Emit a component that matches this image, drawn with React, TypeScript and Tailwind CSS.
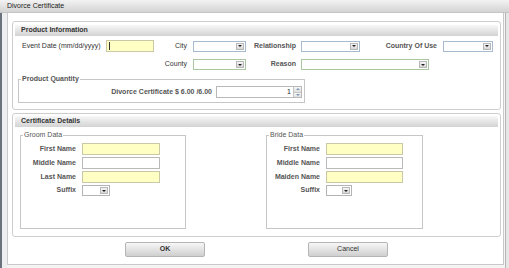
import React from 'react';

type Tone = 'blue' | 'green' | 'gray';

const borderFor = (tone: Tone) =>
  tone === 'green' ? 'border-[#a9c8a0]' : tone === 'blue' ? 'border-[#a6bad0]' : 'border-[#b4b4b4]';

const Select = ({ w, tone = 'blue' }: { w: string; tone?: Tone }) => (
  <div className={`flex h-[11px] ${w} border ${borderFor(tone)} bg-white justify-end`}>
    <div className="w-[8px] my-[1px] mr-[1px] border border-[#b8b8b8] bg-gradient-to-b from-[#f6f6f6] to-[#d6d6d6] flex items-center justify-center">
      <div className="w-0 h-0 border-l-[2px] border-r-[2px] border-t-[2px] border-l-transparent border-r-transparent border-t-[#222]" />
    </div>
  </div>
);

const Input = ({ w, yellow = false, cursor = false }: { w: string; yellow?: boolean; cursor?: boolean }) => (
  <div
    className={`flex items-center h-[12px] ${w} border ${
      yellow ? 'bg-[#ffffc4] border-[#c9c9a8]' : 'bg-white border-[#b9b9b9]'
    }`}
  >
    {cursor && <div className="ml-[2px] w-px h-[8px] bg-[#333]" />}
  </div>
);

const SectionHeader = ({ title }: { title: string }) => (
  <div className="h-[11px] rounded-t-[2px] bg-gradient-to-b from-[#f7f7f7] to-[#d3d3d3] pl-[6px] flex items-center font-bold text-[#333]">
    {title}
  </div>
);

const PersonFieldset = ({
  legend,
  labelW,
  inputW,
  suffixW,
  w,
  rows,
}: {
  legend: string;
  labelW: string;
  inputW: string;
  suffixW: string;
  w: string;
  rows: { label: string; yellow: boolean }[];
}) => (
  <fieldset className={`${w} h-[98px] border border-[#c6c6c6] pt-[4px]`}>
    <legend className="ml-[2px] px-[1px] leading-[8px] text-[#555]">{legend}</legend>
    <div className="flex flex-col gap-[2px]">
      {rows.map((r) => (
        <div key={r.label} className="flex items-center">
          <div className={`${labelW} text-right font-bold text-[#555]`}>{r.label}</div>
          <div className="ml-[6px]">
            <Input w={inputW} yellow={r.yellow} />
          </div>
        </div>
      ))}
      <div className="flex items-center">
        <div className={`${labelW} text-right font-bold text-[#555]`}>Suffix</div>
        <div className="ml-[6px]">
          <Select w={suffixW} tone="gray" />
        </div>
      </div>
    </div>
  </fieldset>
);

export default function App() {
  return (
    <div className="w-[509px] h-[268px] overflow-hidden bg-[#f4f4f4] flex flex-col font-['Liberation_Sans',Arial,sans-serif] text-[7px] text-[#333]">
      {/* Title bar */}
      <div className="h-[13px] shrink-0 bg-gradient-to-b from-[#f3f3f3] to-[#d4d4d4] border-b border-[#c4c4c4] pl-[7px] flex items-center text-[#222]">
        Divorce Certificate
      </div>

      <div className="flex flex-1">
        <div className="w-[2px] bg-[#6a737d]" />
        <div className="w-[5px] bg-[#eceef0]" />

        {/* Window body */}
        <div className="w-[497px] h-[252px] bg-white border-x border-b border-[#c9c9c9] pt-[8px] pl-[4px] flex flex-col">
          {/* Product Information */}
          <div className="w-[489px] h-[89px] shrink-0 border border-[#cecece] rounded-[3px] px-[2px] pt-[3px]">
            <SectionHeader title="Product Information" />

            <div className="mt-[4px] flex items-center">
              <div className="w-[91px] pl-[7px]">Event Date (mm/dd/yyyy)</div>
              <Input w="w-[48px]" yellow cursor />
              <div className="w-[33px] text-right">City</div>
              <div className="ml-[6px]">
                <Select w="w-[53px]" />
              </div>
              <div className="w-[50px] text-right font-bold text-[#555]">Relationship</div>
              <div className="ml-[5px]">
                <Select w="w-[59px]" />
              </div>
              <div className="w-[77px] text-right font-bold text-[#555]">Country Of Use</div>
              <div className="ml-[6px]">
                <Select w="w-[50px]" />
              </div>
            </div>

            <div className="mt-[7px] flex items-center">
              <div className="w-[172px] text-right">County</div>
              <div className="ml-[6px]">
                <Select w="w-[53px]" tone="green" />
              </div>
              <div className="w-[50px] text-right font-bold text-[#555]">Reason</div>
              <div className="ml-[5px]">
                <Select w="w-[128px]" tone="green" />
              </div>
            </div>

            <fieldset className="ml-[3px] mt-[5px] w-[287px] border border-[#c6c6c6] pt-[3px] pb-[4px] pr-[2px]">
              <legend className="ml-[2px] px-[1px] leading-[8px] text-[#555] font-bold">Product Quantity</legend>
              <div className="flex items-center justify-end">
                <div className="font-bold text-[#555]">Divorce Certificate $ 6.00 /6.00</div>
                <div className="ml-[4px] w-[86px] h-[12px] border border-[#b9b9b9] bg-white flex items-center justify-end">
                  <span className="mr-[2px] text-[#222]">1</span>
                  <div className="w-[8px] h-full flex flex-col border-l border-[#c4c4c4]">
                    <div className="flex-1 bg-gradient-to-b from-[#f6f6f6] to-[#dedede] border-b border-[#c4c4c4] flex items-center justify-center">
                      <div className="w-0 h-0 border-l-[2px] border-r-[2px] border-b-[2px] border-l-transparent border-r-transparent border-b-[#7f97b2]" />
                    </div>
                    <div className="flex-1 bg-gradient-to-b from-[#f6f6f6] to-[#dedede] flex items-center justify-center">
                      <div className="w-0 h-0 border-l-[2px] border-r-[2px] border-t-[2px] border-l-transparent border-r-transparent border-t-[#7f97b2]" />
                    </div>
                  </div>
                </div>
              </div>
            </fieldset>
          </div>

          {/* Certificate Details */}
          <div className="mt-[3px] w-[489px] h-[124px] shrink-0 border border-[#cecece] rounded-[3px] px-[2px] pt-[2px]">
            <SectionHeader title="Certificate Details" />
            <div className="mt-[4px] flex">
              <div className="ml-[5px]">
                <PersonFieldset
                  legend="Groom Data"
                  w="w-[166px]"
                  labelW="w-[55px]"
                  inputW="w-[78px]"
                  suffixW="w-[28px]"
                  rows={[
                    { label: 'First Name', yellow: true },
                    { label: 'Middle Name', yellow: false },
                    { label: 'Last Name', yellow: true },
                  ]}
                />
              </div>
              <div className="ml-[80px]">
                <PersonFieldset
                  legend="Bride Data"
                  w="w-[157px]"
                  labelW="w-[53px]"
                  inputW="w-[77px]"
                  suffixW="w-[26px]"
                  rows={[
                    { label: 'First Name', yellow: true },
                    { label: 'Middle Name', yellow: false },
                    { label: 'Maiden Name', yellow: true },
                  ]}
                />
              </div>
            </div>
          </div>

          {/* Buttons */}
          <div className="mt-[5px] ml-[113px] flex gap-[103px]">
            <button className="w-[80px] h-[15px] border border-[#b4b4b4] rounded-[2px] bg-gradient-to-b from-[#f7f7f7] to-[#cfcfcf] font-bold text-[#333]">
              OK
            </button>
            <button className="w-[80px] h-[15px] border border-[#b4b4b4] rounded-[2px] bg-gradient-to-b from-[#f7f7f7] to-[#cfcfcf] text-[#333]">
              Cancel
            </button>
          </div>
        </div>

        <div className="w-px bg-[#f6f6f6]" />
        <div className="w-px bg-[#b4b4b4]" />
        <div className="flex-1 bg-[#e6e6e6]" />
      </div>
    </div>
  );
}
